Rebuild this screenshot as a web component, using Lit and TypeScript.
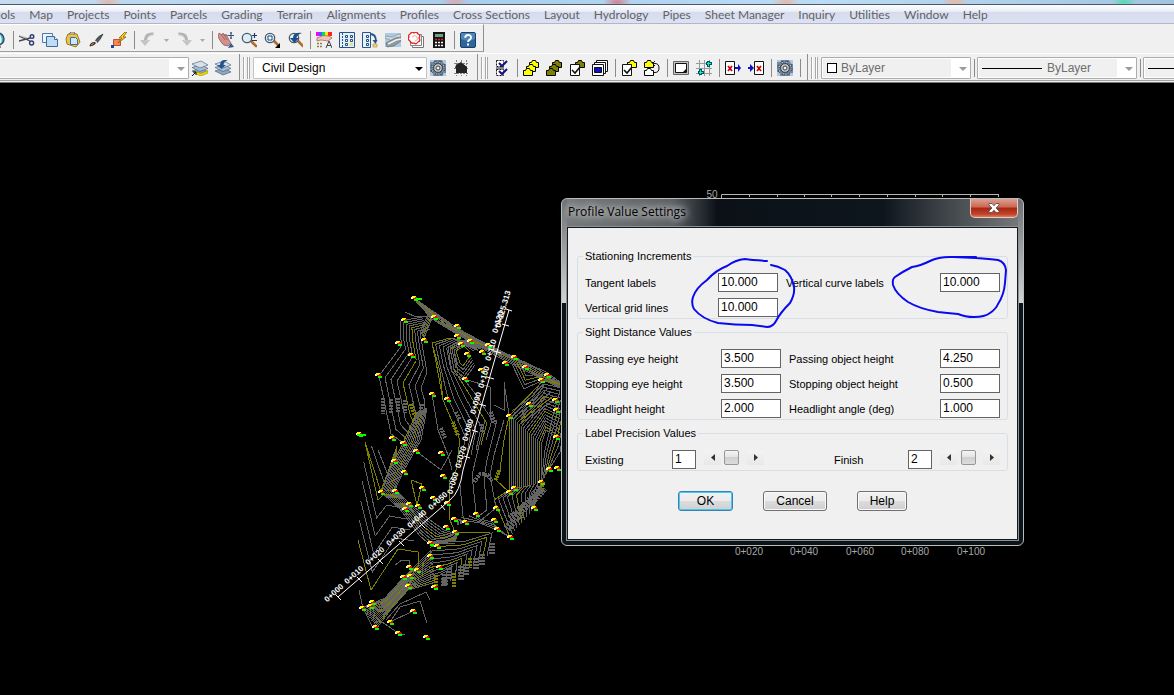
import { LitElement, html, svg, css } from "lit";
import { customElement, property } from "lit/decorators.js";

type Pt = [number, number];

const GREY = "#646464";
const OLIVE = "#808000";

const folder = (x: number, y: number, fill: string) => svg`
  <path d="M${x} ${y + 2}h2l1-2h3l1 2h2v5h-9z" fill=${fill} stroke="#000"/>`;

const gear = svg`
  <rect width="16" height="16" fill="#6a8bad"/>
  <path d="M0 0h4v2h-4zM12 0h4v4h-2zM0 12h3v4h-3zM13 13h3v3h-3z" fill="#b4c6d8"/>
  <circle cx="8" cy="8" r="6" fill="none" stroke="#3f4347" stroke-width="3" stroke-dasharray="2.400 2.310"/>
  <circle cx="8" cy="8" r="6" fill="none" stroke="#c3c6c8" stroke-width="1.400" stroke-dasharray="1.400 3.310" stroke-dashoffset="-.5"/>
  <circle cx="8" cy="8" r="4.400" fill="#c3c6c8" stroke="#3f4347" stroke-width="1"/>
  <circle cx="8" cy="8" r="2" fill="#f2f4f5" stroke="#3f4347" stroke-width="1"/>`;

const lens = svg`
  <path d="M10 9l5 5" stroke="#b5692a" stroke-width="2.6" stroke-linecap="round"/>
  <circle cx="6" cy="6" r="4.7" fill="#d9eef9" stroke="#4b5a69" stroke-width="1.3"/>`;

const layers = svg`
  <path d="M0 11l8 4 8-3-7-4z" fill="#8fa7bf" stroke="#3d5875" stroke-width=".6"/>
  <path d="M0 7.500l8 4 8-3-7-4z" fill="#a9bfd3" stroke="#3d5875" stroke-width=".6"/>
  <path d="M0 4l8 4 8-3-7-4z" fill="#d5e2ec" stroke="#3d5875" stroke-width=".6"/>`;

const icons: Record<string, unknown> = {
  globe: svg`<circle cx="8" cy="7" r="6" fill="#39b5c9" stroke="#33465e" stroke-width="1.4"/><path d="M8 2q4 4 2 9" stroke="#e6fbff" stroke-width="2" fill="none"/><path d="M8 13v2h3" stroke="#222" fill="none"/>`,
  cut: svg`<path d="M0 4l11 5M0 9l11-3" stroke="#45474c" stroke-width="1.3"/><path d="M1 4l7 2" stroke="#aeb3b8"/><circle cx="13" cy="4.6" r="1.8" fill="none" stroke="#2c3a73" stroke-width="1.4"/><circle cx="12.6" cy="11" r="2" fill="none" stroke="#2c3a73" stroke-width="1.4"/>`,
  copy: svg`<path d="M.5 1.500h10v9h-10z" fill="#eef5fc" stroke="#4d7aa8"/><path d="M4.500 4.500h8l3 3v7h-11z" fill="#bfdcf5" stroke="#3a6ea3"/><path d="M12.500 4.500v3h3" fill="#fff" stroke="#3a6ea3"/>`,
  paste: svg`<path d="M3 2l9 0 3 8-4 5-9-3-1-5z" fill="#e8c452" stroke="#9b7a1d"/><path d="M5.500 5.500h5l2 2v5h-7z" fill="#cfe4f7" stroke="#3d6d9c"/><path d="M4 2l2-2h3l1 2" fill="none" stroke="#666"/>`,
  brush: svg`<path d="M15 2q-5 2-8 7l2 2q4-4 6-9z" fill="#55585b" stroke="#222" stroke-width=".6"/><path d="M7 9l2 2" stroke="#ddd" stroke-width="1.5"/><path d="M6.500 10q-4 0-5 4 4 1 6.500-3z" fill="#222"/><path d="M3 13l3-2" stroke="#d9772b" stroke-width="1.4"/>`,
  bolt: svg`<path d="M2.500 7.500h7v6h-7z" fill="#f08a5d" stroke="#c3502b"/><path d="M14 0l-6 6h3l-4 5 8-6h-3l4-5z" fill="#ffd21c" stroke="#7d5e00" stroke-width=".8"/><path d="M0 13h3v3h-3z" fill="#17498c"/>`,
  undo: svg`<path d="M13.500 2q-8-1-8 7" fill="none" stroke="#b2b4b6" stroke-width="3"/><path d="M0 8h10l-5 6z" fill="#c2c4c6"/><path d="M14 3q-6 0-7 6" fill="none" stroke="#dfe0e1"/>`,
  redo: svg`<path d="M2.500 2q8-1 8 7" fill="none" stroke="#b2b4b6" stroke-width="3"/><path d="M6 8h10l-5 6z" fill="#c2c4c6"/><path d="M2 3q6 0 7 6" fill="none" stroke="#dfe0e1"/>`,
  pan: svg`<path d="M1 1l3 2 1-2 2 3 1-2 3 6 2 3-3 3q-5 0-7-4l-3-5z" fill="#d2918d" stroke="#87504d" stroke-width=".7"/><path d="M3 2l4 6M6 2l3 6" stroke="#87504d" stroke-width=".6"/><path d="M10 16l3-5 3 4z" fill="#31578a"/><path d="M13 0v7M9.500 3.500h7M12 1h2M12 6h2" stroke="#2d4f7b"/>`,
  zoomrt: svg`${lens}<path d="M13.500 1v5M11 3.500h5M11 8.500h5" stroke="#1c3c66" stroke-width="1.2"/>`,
  zoomwin: svg`${lens}<path d="M4 4h4v4h-4z" fill="#fff" stroke="#174b85"/><path d="M11 16h5v-5z" fill="#000"/>`,
  zoomprev: svg`<g transform="translate(1 0)">${lens}</g><path d="M15 1q-9-1-9 5h-3l4.500 5 4.500-5h-2.500q0-3 5.500-5z" fill="#1d4d86"/>`,
  props: svg`<path d="M0 0h3v4h-3z" fill="#f0f"/><path d="M3 0h3v4h-3z" fill="#36f"/><path d="M6 0h3v4h-3z" fill="#0d6"/><path d="M9 0h3v4h-3z" fill="#fe0"/><path d="M12 0h4v4h-4z" fill="#f22"/><path d="M1 6q6-4 12-2l3 2-4 3-7-1-4 1z" fill="#efc5b5" stroke="#9a5a4b" stroke-width=".7"/><path d="M1 11.500h6M1 14.500h6" stroke="#9a7b3c" stroke-width="1.6" stroke-dasharray="2 1"/><path d="M10 16l3-7 3 7M11 13.500h4" stroke="#38424f" fill="none"/>`,
  center: svg`<path d="M.5 .5h15v15h-15z" fill="#e6f0fa" stroke="#285487"/><path d="M3.500 1v14" stroke="#285487" stroke-dasharray="2 1"/><path d="M6.500 3.500h2v2h-2zM11.500 3.500h2v2h-2zM6.500 7.500h2v2h-2zM11.500 7.500h2v2h-2zM6.500 11.500h2v2h-2z" fill="#fff" stroke="#1f4a7d"/><path d="M11 11h3v3h-3z" fill="#f8dc6a"/>`,
  palette: svg`<path d="M.5 .5h8v15h-8z" fill="#e6f0fa" stroke="#285487"/><path d="M4.500 3.500h2v2h-2zM4.500 7.500h2v2h-2zM4.500 11.500h2v2h-2z" fill="#fff" stroke="#1f4a7d"/><path d="M8 2q6 0 6 7" fill="none" stroke="#285487" stroke-width="1.8"/><path d="M10.500 8h5l-2 4z" fill="#285487"/><path d="M11 12h4v3h-4z" fill="#f8dc6a" stroke="#927a23" stroke-width=".5"/>`,
  sheets: svg`<path d="M0 1h16v14h-16z" fill="#a9cbe6"/><path d="M0 4l7 1 7-3 2 1v5l-6 2-10-4z" fill="#d3d6d6" stroke="#7c868c" stroke-width=".6"/><path d="M1 11l9-5 6-1v4l-7 5-7 1z" fill="#8f999e" stroke="#5e6a70" stroke-width=".6"/><path d="M3 12l8-4 5-1" fill="none" stroke="#edf1f2" stroke-width="1.5"/>`,
  markup: svg`<path d="M4.500 4.500h11v11h-11z" fill="#fff" stroke="#777"/><path d="M2.500 2.500h11v11h-11z" fill="#fff" stroke="#888"/><path d="M2 2q2-3 4-1 3-2 4 1 3 1 1 4 2 3-1 4-2 3-4 1-3 1-4-2-3-2-1-4-1-2 1-3z" fill="#fff" stroke="#e32222" stroke-width="1.300"/><path d="M4 5q3-3 5 0t-2 4" fill="none" stroke="#f3a0a0"/>`,
  calc: svg`<path d="M2 0h12v16h-12z" fill="#151515"/><path d="M4 2h8v3h-8z" fill="#6da182"/><path d="M4 7.500h2M7 7.500h2M10 7.500h2" stroke="#d22" stroke-width="1.600"/><path d="M4 10.500h8M4 13.500h8" stroke="#f5f5f5" stroke-width="1.700" stroke-dasharray="2 1"/>`,
  help: svg`<rect x=".5" y=".5" width="15" height="15" rx="1.500" fill="#2f659c" stroke="#183e69"/><path d="M1 1h14v6q-7 3-14 0z" fill="#4f85b9"/><path d="M5.200 5.800q0-2.800 2.900-2.800t2.900 2.500q0 1.500-1.500 2.400T8 10" fill="none" stroke="#fff" stroke-width="1.900"/><path d="M7 11.500h2v2h-2z" fill="#fff"/>`,
  layerstate: svg`${layers}<path d="M3 11l6 2.500 7-3v2.500l-7 3-5-2z" fill="#f0d800" stroke="#8c7d00" stroke-width=".5"/><path d="M0 16l4-4M1 12h3v3" stroke="#111" fill="none"/>`,
  layerprev: svg`${layers}<path d="M13 0q-8-1-8 5h-3l4.500 4 4.500-4h-2.500q0-3 4.500-5z" fill="#27548a"/>`,
  gear,
  house: svg`<path d="M1 3.500h14M1 8.500h14M1 13.500h14M3.500 0v16M8.500 0v16M13.500 0v16" stroke="#76848f" stroke-dasharray="2 1"/><path d="M2 8l1-3 5-3 6 5v6h-11v-5z" fill="#222"/>`,
  checks: svg`<path d="M2.500 .5h7v6h-7zM2.500 9.500h7v6h-7z" fill="#fff" stroke="#111" stroke-dasharray="2 1"/><path d="M2 7h8v2h-8z" fill="#888"/><path d="M5 3l3 3 5-5M5 11l3 3 5-5" fill="none" stroke="#101080" stroke-width="2"/>`,
  foldersY: svg`${folder(6.5, 0.5, "#ff0")}${folder(3.5, 4.500, "#ff0")}${folder(0.5, 8.500, "#ff0")}`,
  foldersO: svg`${folder(6.5, 0.5, "#808000")}${folder(3.5, 4.500, "#808000")}${folder(0.5, 8.500, "#808000")}`,
  checkO: svg`${folder(6.5, 0.5, "#808000")}<path d="M1.500 4.500h9v11h-9z" fill="#fff" stroke="#111"/><path d="M3 10l3 3 5-6" fill="none" stroke="#111" stroke-width="1.600"/>`,
  windows: svg`<path d="M4.500 .5h11v11h-11z" fill="#fff" stroke="#111"/><path d="M2.500 2.500h11v11h-11z" fill="#fff" stroke="#111"/><path d="M.5 4.500h11v11h-11z" fill="#fff" stroke="#111"/><path d="M2.500 7.500h7v5h-7z" fill="#11c" stroke="#111"/>`,
  checkY: svg`${folder(6.5, 0.5, "#ff0")}<path d="M1.500 4.500h9v11h-9z" fill="#fff" stroke="#111"/><path d="M3 10l3 3 5-6" fill="none" stroke="#111" stroke-width="1.600"/>`,
  swap: svg`${folder(0.5, 0.5, "#ff0")}${folder(0.5, 8.500, "#fff")}<path d="M9 3.500h2q4 0 4 4.500t-4 4.500h-1" fill="none" stroke="#111"/><path d="M11 1l-2.500 2.500 2.500 2.500" fill="none" stroke="#111"/>`,
  layout: svg`<path d="M.5 1.500h15v13h-15z" fill="#c4c4c4" stroke="#666"/><path d="M2.500 3.500h11v9h-11z" fill="#fff" stroke="#111"/><path d="M10 12l3-3v3z" fill="#111"/>`,
  grid: svg`<path d="M0 3.500h16M0 8.500h16M0 13.500h16M3.500 0v16M8.500 0v16M13.500 0v16" stroke="#9a9a9a"/><path d="M12.500 1v6M10 3.500h6M4.500 9v6M2 12.500h6" stroke="#055" stroke-width="3"/><path d="M12.500 2v4M11 3.500h4M4.500 10v4M3 12.500h4" stroke="#0ee"/>`,
  xout: svg`<path d="M.5 1.500h9v13h-9z" fill="#fff" stroke="#111"/><path d="M3 6l4 5M7 6l-4 5" stroke="#c00" stroke-width="1.700"/><path d="M10 7h3v-3l3 4-3 4v-3h-3z" fill="#11c"/>`,
  xin: svg`<path d="M6.500 1.500h9v13h-9z" fill="#fff" stroke="#111"/><path d="M9 6l4 5M13 6l-4 5" stroke="#c00" stroke-width="1.700"/><path d="M0 7h2v-3l4 4-4 4v-3h-2z" fill="#11c"/>`,
};

@customElement("tool-button")
class ToolButton extends LitElement {
  @property() icon = "";
  static styles = css`
    :host { display: block; flex: none; }
    .tool { display: flex; align-items: center; width: 23px; height: 22px; padding: 0 4px 0 3px; border: 0; background: none; }
    .glyph { display: block; width: 16px; height: 16px; }
  `;
  render() {
    return html`<button class="tool" aria-label=${this.icon}>
      <svg class="glyph" viewBox="0 0 16 16">${icons[this.icon]}</svg>
    </button>`;
  }
}

@customElement("tool-combo")
class ToolCombo extends LitElement {
  @property() value = "";
  @property() label = "";
  @property() lead = "";
  @property({ type: Boolean }) off = false;
  static styles = css`
    :host { display: block; position: relative; flex: none; }
    .box {
      appearance: none; display: block; box-sizing: border-box; width: 100%; height: 22px;
      padding: 0 20px 0 8px; border: 1px solid #c2c2c2; border-radius: 1px; background: #fff;
      font: 12px "Liberation Sans", Arial, sans-serif; color: #000; opacity: 1;
    }
    .box:disabled {
      color: #6d6d6d; border-color: #acacac; box-shadow: inset 0 0 0 1px #fff;
      background: linear-gradient(90deg, #f0f0f0, #f0f0f0) 1px 1px / calc(100% - 20px) calc(100% - 2px) no-repeat #fff;
    }
    .swatch { padding-left: 19px; }
    .line { padding-left: 69px; }
    .art { position: absolute; left: 5px; top: 5px; width: 62px; height: 12px; pointer-events: none; }
    .arrow { position: absolute; right: 3px; top: 10px; width: 9px; height: 5px; pointer-events: none; }
  `;
  render() {
    return html`
      <select class="box ${this.lead}" aria-label=${this.label} ?disabled=${this.off}><option>${this.value}</option></select>
      ${this.lead ? html`<svg class="art" viewBox="0 0 62 12">
        ${this.lead === "swatch"
          ? svg`<rect x="1.500" y="1.500" width="9" height="9" fill="#fff" stroke="#000"/>`
          : svg`<path d="M0 6.500h60" stroke="#000"/>`}
      </svg>` : ""}
      <svg class="arrow" viewBox="0 0 9 5"><path d="M0 0h8l-4 4z" fill=${this.off ? "#9a9a9a" : "#000"}/></svg>
    `;
  }
}

/* Intermediate contours between two bounding polylines of equal vertex count. */
function family(a: Pt[], b: Pt[], n: number, phase = 0) {
  return Array.from({ length: n }, (_, i) => {
    const t = n > 1 ? i / (n - 1) : 0;
    const pts = a.map(([x, y], k) => [x + (b[k][0] - x) * t, y + (b[k][1] - y) * t].map(v => v.toFixed(1)).join(","));
    return { points: pts.join(" "), color: (i + phase) % 5 === 0 ? OLIVE : GREY };
  });
}

const contours = [
  ...family([[402,345],[379,376],[391,434],[402,442]], [[427,372],[421,388],[425,402],[424,410]], 8, 1),
  ...family([[422,317],[401,321],[400,335],[402,345]], [[430,329],[420,333],[423,350],[427,372]], 8, 1),
  ...family([[414,298],[457,328],[490,346],[546,372],[560,382]], [[414,299],[432,319],[460,336],[500,358],[560,388]], 7, 2),
  ...family([[414,299],[428,314],[420,333]], [[418,302],[432,318],[424,338]], 5, 2),
  ...family([[485,345],[450,338],[432,343],[436,362],[443,400],[460,440],[456,470]], [[476,350],[462,343],[454,351],[458,372],[474,392],[492,420],[486,440]], 7),
  ...family([[487,349],[464,340],[448,347],[452,372],[464,380],[475,365]], [[470,352],[464,346],[456,351],[460,363],[463,366],[470,356]], 5, 1),
  ...family([[417,412],[403,443],[394,461],[381,490]], [[427,408],[421,440],[404,470],[394,492]], 10),
  ...family([[381,492],[400,509],[419,535],[428,543],[455,543]], [[395,490],[408,502],[430,520],[444,530],[458,535]], 9, 1),
  ...family([[365,442],[378,500],[384,494],[398,497]], [[358,540],[371,590],[398,549],[418,552]], 6),
  ...family([[365,442],[381,492],[397,446]], [[378,450],[388,475],[397,452]], 3),
  ...family([[362,608],[385,598],[404,577],[431,550]], [[377,628],[392,608],[408,590],[436,582]], 15, 2),
  ...family([[430,543],[466,541],[492,533],[487,556]], [[428,580],[438,576],[447,571],[446,584]], 10, 4),
  ...family([[560,384],[543,381],[509,416],[509,492]], [[560,440],[546,430],[541,445],[541,482]], 17),
  ...family([[560,390],[552,420],[545,450],[541,484]], [[562,440],[560,452],[555,460],[549,469]], 6, 2),
  ...family([[509,490],[494,500],[510,537]], [[541,482],[539,490],[534,508]], 11),
  ...family([[508,356],[524,389],[541,381]], [[518,358],[526,376],[540,374]], 4, 3),
  ...family([[541,381],[534,395],[512,411]], [[556,400],[548,404],[520,424]], 6, 1),
  ...family([[454,519],[480,523],[497,530],[510,537]], [[476,514],[480,519],[492,522],[503,533]], 4, 1),
];

const strokes: [string, string][] = [
  [OLIVE, "418,552 418,566 404,577"],
  [OLIVE, "411,480 422,484 417,505 411,480"],
  [OLIVE, "456,470 449,482 450,520 455,532 490,532"],
  [OLIVE, "509,416 504,440 500,470 496,480 509,492"],
  [OLIVE, "432,343 440,372 443,400 460,440"],
  [GREY, "405,312 416,317 428,316"],
  [GREY, "494,405 504,410 504,382 509,415"],
  [GREY, "465,379 490,387 491,420"],
  [GREY, "432,394 438,430 448,455 452,470"],
  [GREY, "416,451 441,470 452,450"],
  [GREY, "504,420 494,455 490,475"],
  [GREY, "485,420 472,475 476,512"],
  [GREY, "497,420 487,460 484,478 487,510 476,518"],
  [GREY, "460,485 463,516 465,522"],
  [GREY, "490,475 496,508 480,521"],
  [GREY, "395,565 402,560 410,561 409,567"],
  [GREY, "386,620 400,604 426,592 430,600"],
  [GREY, "390,622 400,607 420,601 427,623"],
  [GREY, "362,608 398,633 405,635"],
  [GREY, "359,590 363,608 372,626"],
  [GREY, "390,622 413,611"],
];

/* Elevation figures too small to read: plotted as stippled runs. */
const stipple: [string, string, number][] = [
  [GREY, "M383 398v16M391 399v15M398 398v14M405 400v13M422 404l-2 12M441 428l4 10M456 412l4 8M491 412l4 12M481 424l2 8", 4],
  [OLIVE, "M411 404l4 12M453 422l5 14M499 470l-3 10M454 573v14M543 482l-2 12M519 506l3 12M470 558v10M436 575v14", 4],
  [GREY, "M444 578v8M461 566v14M466 564v12M476 558v12M482 554v12M492 543v12M445 574v12M449 568v12", 6],
  [GREY, "M507 529l34-42M510 519l22-18M530 504l14-16", 8],
  [GREY, "M474 482l6-8 8 1 4 6M457 523l6-2", 4],
];

const shots: Pt[] = [
  [414,298],[404,320],[398,343],[411,355],[424,340],[434,317],[378,375],[432,394],[447,399],[359,434],[392,438],[403,443],
  [394,461],[416,451],[441,453],[457,326],[457,336],[461,344],[470,341],[488,345],[482,352],[467,354],[481,370],[465,379],
  [505,363],[514,357],[525,367],[547,375],[541,380],[555,400],[556,410],[529,404],[509,416],[556,437],[549,469],[557,468],
  [381,492],[395,491],[404,472],[422,488],[433,498],[443,476],[409,504],[405,509],[418,506],[446,527],[430,543],[437,546],
  [430,556],[409,567],[417,570],[439,567],[403,577],[410,576],[408,586],[434,587],[372,602],[370,606],[362,608],[375,627],
  [390,622],[413,611],[398,633],[426,637],[447,503],[454,519],[465,522],[455,532],[476,514],[494,520],[496,508],[497,529],
  [509,492],[514,488],[541,482],[534,508],[510,537],
];

const stations: [string, number, number, number][] = [
  ["0+000", 334, 593, -42], ["0+010", 354, 575, -42], ["0+020", 375, 556, -42], ["0+030", 396, 537, -42],
  ["0+040", 417, 519, -42], ["0+050", 438, 501, -42], ["0+060", 453, 483, -74], ["0+070", 461, 457, -74],
  ["0+080", 468, 430, -74], ["0+090", 476, 403, -74], ["0+100", 484, 377, -74], ["0+110", 491, 350, -74],
  ["0+120", 498, 322, -74], ["0+125.313", 503, 309, -74],
];

const chartLabels: [string, number][] = [["0+020", 749], ["0+040", 804], ["0+060", 860], ["0+080", 915], ["0+100", 971]];

@customElement("drawing-view")
class DrawingView extends LitElement {
  static styles = css`
    :host { display: block; height: 100%; }
    .sheet { display: block; width: 100%; height: 100%; }
    .contour { fill: none; stroke-width: 1; shape-rendering: crispEdges; }
    .stipple { fill: none; stroke-dasharray: 2 1; shape-rendering: crispEdges; }
    .shot { shape-rendering: crispEdges; }
    .axis { fill: none; stroke: #fff; }
    .station { fill: #fff; font: bold 8px "Liberation Sans", Arial, sans-serif; text-anchor: middle; dominant-baseline: central; }
    .frame { fill: none; stroke: #b4b4b4; }
    .tick { fill: #a8a8a8; font: 10px "Liberation Sans", Arial, sans-serif; text-anchor: middle; }
  `;
  render() {
    return html`<svg class="sheet" role="img" aria-label="Site plan and profile">
      <g transform="translate(0 -83)">
        ${contours.map(c => svg`<polyline class="contour" points=${c.points} stroke=${c.color}/>`)}
        ${strokes.map(([c, p]) => svg`<polyline class="contour" points=${p} stroke=${c}/>`)}
        ${stipple.map(([c, d, w]) => svg`<path class="stipple" d=${d} stroke=${c} stroke-width=${w}/>`)}
        ${shots.map(([x, y]) => svg`<g class="shot" transform="translate(${x} ${y})">
          <path d="M-3-1h2v2h-2z" fill="#fff"/><path d="M-2-2h4v2h-4z" fill="#ff0"/>
          <path d="M0 1h4v2h-4z" fill="#0f0"/><path d="M-1-1h4v2h-4z" fill="#f00"/><path d="M-2-2h3v2h-3z" fill="#ff0"/></g>`)}
        <path class="shot" d="M357 435h9M416 299h6" stroke="#0f0" stroke-width="2"/>
        <path class="axis" d="M338 597L450 500Q460 492 463 470L509 310"/>
        <path class="axis" d="M336 595l5 5M357 577l5 5M378 559l5 5M399 541l5 5M420 523l5 5M441 505l4 5M464 456l6 2M472 430l6 2M479 404l7 2M487 377l7 2M494 351l7 2M502 324l7 2M506 309l6 2"/>
        ${stations.map(([t, x, y, r]) => svg`<text class="station" transform="translate(${x} ${y}) rotate(${r})">${t}</text>`)}
        <path class="frame" d="M721.500 199v-4.500H999M749.500 194v3M777.500 194v3M804.500 194v3M831.500 194v3M859.500 194v3M887.500 194v3M915.500 194v3M942.500 194v3M970.500 194v3M998.500 194v3"/>
        <text class="tick" x="712" y="198">50</text>
        ${chartLabels.map(([t, x]) => svg`<text class="tick" x=${x} y="555">${t}</text>`)}
      </g>
    </svg>`;
  }
}

@customElement("settings-dialog")
class SettingsDialog extends LitElement {
  static styles = css`
    :host { display: block; }
    .window {
      box-sizing: border-box; width: 463px; padding: 0 5px 5px; border: 1px solid #b9bcbd; border-radius: 6px;
      background:
        linear-gradient(180deg, #6c7072, #d2d4d4 104px, transparent 104px) 0 0 / 5px 100% no-repeat,
        linear-gradient(180deg, #6c7072, #d2d4d4 104px, transparent 104px) 100% 0 / 5px 100% no-repeat,
        linear-gradient(90deg, #777b7d, #5e6265 110px, #0b1117 155px, #0d151d 320px, #44494d 390px, #777b7d) 0 0 / 100% 28px no-repeat,
        #0b1419;
      font: 11px "Liberation Sans", Arial, sans-serif; color: #000;
    }
    .bar { display: flex; justify-content: space-between; height: 28px; }
    .title { margin: 0; padding-left: 1px; font: 12px/26px "Open Sans", "Noto Sans", sans-serif; text-shadow: 0 0 6px #ccc, 0 0 8px #ccc, 0 0 10px #bbb; }
    .close {
      display: grid; place-items: center; width: 48px; height: 19px; padding: 0; border: 1px solid #e6c9c4; border-top: 0;
      border-radius: 0 0 5px 5px; background: linear-gradient(#dca092, #cb6753 45%, #a72612 50%, #c2452b 85%, #dd7c5c);
    }
    .cross { width: 12px; height: 10px; }
    .client { box-sizing: border-box; padding: 22px 9px 28px; border: 1px solid #16191b; outline: 1px solid #8b9194; background: #f0f0f0; }
    .group { min-width: 0; margin: 0 0 7px; padding: 10px 7px 1px; border: 1px solid #d5dfe5; border-radius: 3px; }
    .legend { height: 13px; padding: 0 2px; margin-left: -2px; line-height: 13px; }
    .fields { display: grid; grid-template-columns: 136px 60px 1fr 60px; row-gap: 6px; }
    .near { grid-template-columns: 133px 60px 1fr 60px; }
    .name { line-height: 21px; height: 19px; }
    .second { padding-left: 8px; }
    .value { box-sizing: border-box; width: 60px; height: 19px; padding: 0 2px 2px; border: 1px solid #646464; border-radius: 0; background: #fff; font: inherit; font-size: 12px; }
    .digit { width: 24px; }
    .precision { display: flex; justify-content: space-between; }
    .part { display: flex; gap: 8px; width: 179px; }
    .last { width: 166px; }
    .part .name { flex: 1; }
    .scroll { display: flex; width: 60px; height: 15px; background: #ececec; }
    .step { display: grid; place-items: center; width: 17px; padding: 0; border: 0; background: linear-gradient(#f3f3f3, #e8e8e8); }
    .chev { width: 4px; height: 7px; }
    .slide { appearance: none; width: 26px; height: 15px; margin: 0; background: #efefef; }
    .slide::-webkit-slider-thumb { appearance: none; box-sizing: border-box; width: 15px; height: 15px; border: 1px solid #979797; border-radius: 2px; background: linear-gradient(#f4f4f4, #e4e4e4 45%, #d0d0d2 50%, #dcdcde); }
    .actions { display: flex; justify-content: center; gap: 30px; padding-top: 13px; }
    .push { height: 20px; padding: 0; border: 1px solid #707070; border-radius: 3px; background: linear-gradient(#f2f2f2, #ebebeb 50%, #dddddd 50%, #cfcfcf); box-shadow: inset 0 0 0 1px #fafafa; font: inherit; font-size: 12px; color: #000; }
    .main { width: 55px; border-color: #3c7fb1; box-shadow: inset 0 0 0 1px #48c9f2; }
    .wide { width: 64px; }
    .mid { width: 50px; }
  `;
  private field(id: string, name: string, value: string, second = false) {
    return html`<label class="name ${second ? "second" : ""}" for=${id}>${name}</label>
      <input class="value" id=${id} .value=${value}>`;
  }
  private precision(id: string, name: string, value: string, max: string, last = false) {
    return html`<div class="part ${last ? "last" : ""}">
      <label class="name" for=${id}>${name}</label>
      <input class="value digit" id=${id} .value=${value}>
      <div class="scroll">
        <button class="step" aria-label="Decrease"><svg class="chev" viewBox="0 0 4 7"><path d="M4 0v7L0 3.500z" fill="#333"/></svg></button>
        <input class="slide" type="range" min="0" max=${max} .value=${value} aria-label=${name}>
        <button class="step" aria-label="Increase"><svg class="chev" viewBox="0 0 4 7"><path d="M0 0v7L4 3.500z" fill="#333"/></svg></button>
      </div>
    </div>`;
  }
  render() {
    return html`<section class="window" role="dialog" aria-labelledby="title">
      <header class="bar">
        <h1 class="title" id="title">Profile Value Settings</h1>
        <button class="close" aria-label="Close"><svg class="cross" viewBox="0 0 12 10">
          <path d="M1 .5h3l2 2.300 2-2.300h3v1.500l-3 3 3 3v1.500h-3l-2-2.300-2 2.300h-3v-1.500l3-3-3-3z" fill="#fff" stroke="#53464a" stroke-width=".8"/></svg></button>
      </header>
      <div class="client">
        <fieldset class="group"><legend class="legend">Stationing Increments</legend>
          <div class="fields near">
            ${this.field("tangent", "Tangent labels", "10.000")}
            ${this.field("curve", "Vertical curve labels", "10.000", true)}
            ${this.field("gridlines", "Vertical grid lines", "10.000")}
          </div>
        </fieldset>
        <fieldset class="group"><legend class="legend">Sight Distance Values</legend>
          <div class="fields">
            ${this.field("pass-eye", "Passing eye height", "3.500")}
            ${this.field("pass-obj", "Passing object height", "4.250", true)}
            ${this.field("stop-eye", "Stopping eye height", "3.500")}
            ${this.field("stop-obj", "Stopping object height", "0.500", true)}
            ${this.field("head-h", "Headlight height", "2.000")}
            ${this.field("head-a", "Headlight angle (deg)", "1.000", true)}
          </div>
        </fieldset>
        <fieldset class="group"><legend class="legend">Label Precision Values</legend>
          <div class="precision">
            ${this.precision("existing", "Existing", "1", "4")}
            ${this.precision("finish", "Finish", "2", "6", true)}
          </div>
        </fieldset>
        <div class="actions">
          <button class="push main">OK</button>
          <button class="push wide">Cancel</button>
          <button class="push mid">Help</button>
        </div>
      </div>
    </section>`;
  }
}

const menu = ["Tools", "Map", "Projects", "Points", "Parcels", "Grading", "Terrain", "Alignments", "Profiles", "Cross Sections",
  "Layout", "Hydrology", "Pipes", "Sheet Manager", "Inquiry", "Utilities", "Window", "Help"];

@customElement("app-root")
class AppRoot extends LitElement {
  static styles = css`
    :host { display: flex; flex-direction: column; height: 100vh; overflow: hidden; background: #000; }
    .caption {
      flex: none; height: 4px; border-bottom: 1px solid #4b5866;
      background:
        radial-gradient(14px 6px at 108px 2px, #e0b7a8, transparent), radial-gradient(14px 6px at 455px 2px, #d9a9ad, transparent),
        radial-gradient(14px 6px at 617px 2px, #d2808c, transparent), radial-gradient(14px 6px at 786px 2px, #e5b9a5, transparent),
        radial-gradient(14px 6px at 955px 2px, #e8b7a0, transparent), radial-gradient(12px 6px at 1124px 2px, #52dcab, transparent),
        linear-gradient(90deg, #c6dcf0, #a9cdec 40%, #bcdcf5 70%, #a3c3e0);
    }
    .menu {
      flex: none; display: flex; gap: 14px; height: 18px; border-bottom: 1px solid #b1b6cd; overflow: hidden;
      background: linear-gradient(#fdfdfe, #eceff8 35%, #d6dcee 40%, #dde2f2);
    }
    .entry { flex: none; font: 12px/19px Lato, "Open Sans", sans-serif; color: #626266; text-decoration: none; white-space: nowrap; }
    .entry:first-child { margin-left: -12px; }
    .row { flex: none; display: flex; overflow: hidden; background: #f0f0f0; }
    .upper { height: 29px; }
    .lower { height: 28px; border-top: 1px solid #fff; border-bottom: 1px solid #777; }
    .strip { flex: none; display: flex; align-items: center; box-sizing: border-box; border-right: 1px solid #8f8f8f; border-bottom: 1px solid #a0a0a0; }
    .upper .strip { height: 28px; padding: 4px 3px 0 0; border-top: 1px solid #fff; }
    .lower .strip { height: 27px; padding: 2px 4px 0 0; }
    .lower .strip:last-child { flex: 1 0 auto; border-right: 0; }
    .sep { flex: none; width: 6px; height: 18px; background: linear-gradient(#8a8a8a, #8a8a8a) 50% 0 / 1px 100% no-repeat; }
    .partial { margin-left: -13px; }
    .flyout { display: grid; place-items: center; flex: none; width: 13px; height: 20px; padding: 0; border: 0; background: none; }
    .tip { width: 5px; height: 3px; }
    .grip { flex: none; width: 7px; height: 22px; margin: 0 3px; border: solid #a8a8a8; border-width: 0 1px; box-sizing: border-box; background: linear-gradient(90deg, #fff 1px, #f0f0f0 1px 3px, #a8a8a8 3px 4px, #fff 4px); }
    .c1 { width: 205px; margin-left: -16px; }
    .c2 { width: 174px; }
    .c3 { width: 150px; }
    .c4 { width: 160px; }
    .work { position: relative; flex: 1; min-height: 0; overflow: hidden; background: #000; }
    .dialog { position: absolute; left: 561px; top: 115px; }
    .ink { position: absolute; inset: 0; width: 100%; height: 100%; pointer-events: none; }
    .pen { fill: none; stroke: #0a0aee; stroke-width: 2; stroke-linecap: round; stroke-linejoin: round; }
  `;
  private tools(names: string) {
    return names.split(" ").map(n =>
      n === "|" ? html`<span class="sep"></span>`
      : n === "v" ? html`<button class="flyout" aria-label="More"><svg class="tip" viewBox="0 0 5 3"><path d="M0 0h5L2.500 3z" fill="#aaa"/></svg></button>`
      : html`<tool-button icon=${n}></tool-button>`);
  }
  render() {
    return html`
      <div class="caption"></div>
      <nav class="menu">${menu.map(m => html`<a class="entry" href="#">${m}</a>`)}</nav>
      <div class="row upper">
        <div class="strip">
          <tool-button class="partial" icon="globe"></tool-button>
          ${this.tools("| cut copy paste brush bolt | undo v redo v | pan zoomrt zoomwin zoomprev | props center palette sheets markup calc | help")}
        </div>
      </div>
      <div class="row lower">
        <div class="strip">
          <tool-combo class="c1" label="Layer" off></tool-combo>
          ${this.tools("layerstate layerprev")}
        </div>
        <div class="strip">
          <span class="grip"></span>
          <tool-combo class="c2" label="Workspace" value="Civil Design"></tool-combo>
          ${this.tools("gear house")}
        </div>
        <div class="strip">
          <span class="grip"></span>
          ${this.tools("checks | foldersY foldersO checkO windows | checkY swap | layout grid | xout xin | gear |")}
        </div>
        <div class="strip">
          <span class="grip"></span>
          <tool-combo class="c3" label="Color" value="ByLayer" lead="swatch" off></tool-combo>
          <span class="sep"></span>
          <tool-combo class="c4" label="Linetype" value="ByLayer" lead="line" off></tool-combo>
          <span class="sep"></span>
          <tool-combo class="c4" label="Lineweight" value="ByLayer" lead="line" off></tool-combo>
        </div>
      </div>
      <main class="work">
        <drawing-view></drawing-view>
        <settings-dialog class="dialog"></settings-dialog>
        <svg class="ink"><g transform="translate(0 -83)">
          <path class="pen" d="M767 261Q752 260 745 259 735 260 727 266 716 270 707 280 696 288 693 297 691 304 694 309 702 319 718 323 735 325 752 325L767 327Q773 327 776 321 780 313 790 303 795 294 794 287 792 276 785 270 778 266 771 265"/>
          <path class="pen" d="M976 257H950Q938 257 930 261 920 266 912 267 902 272 895 277 892 279 893 285 896 294 908 302 920 309 938 312 947 313 958 314 965 317 974 317 985 317 990 313 996 309 998 304 1004 295 1005 283L1006 270Q1005 262 998 260 990 259 976 258L953 257"/>
        </g></svg>
      </main>`;
  }
}
